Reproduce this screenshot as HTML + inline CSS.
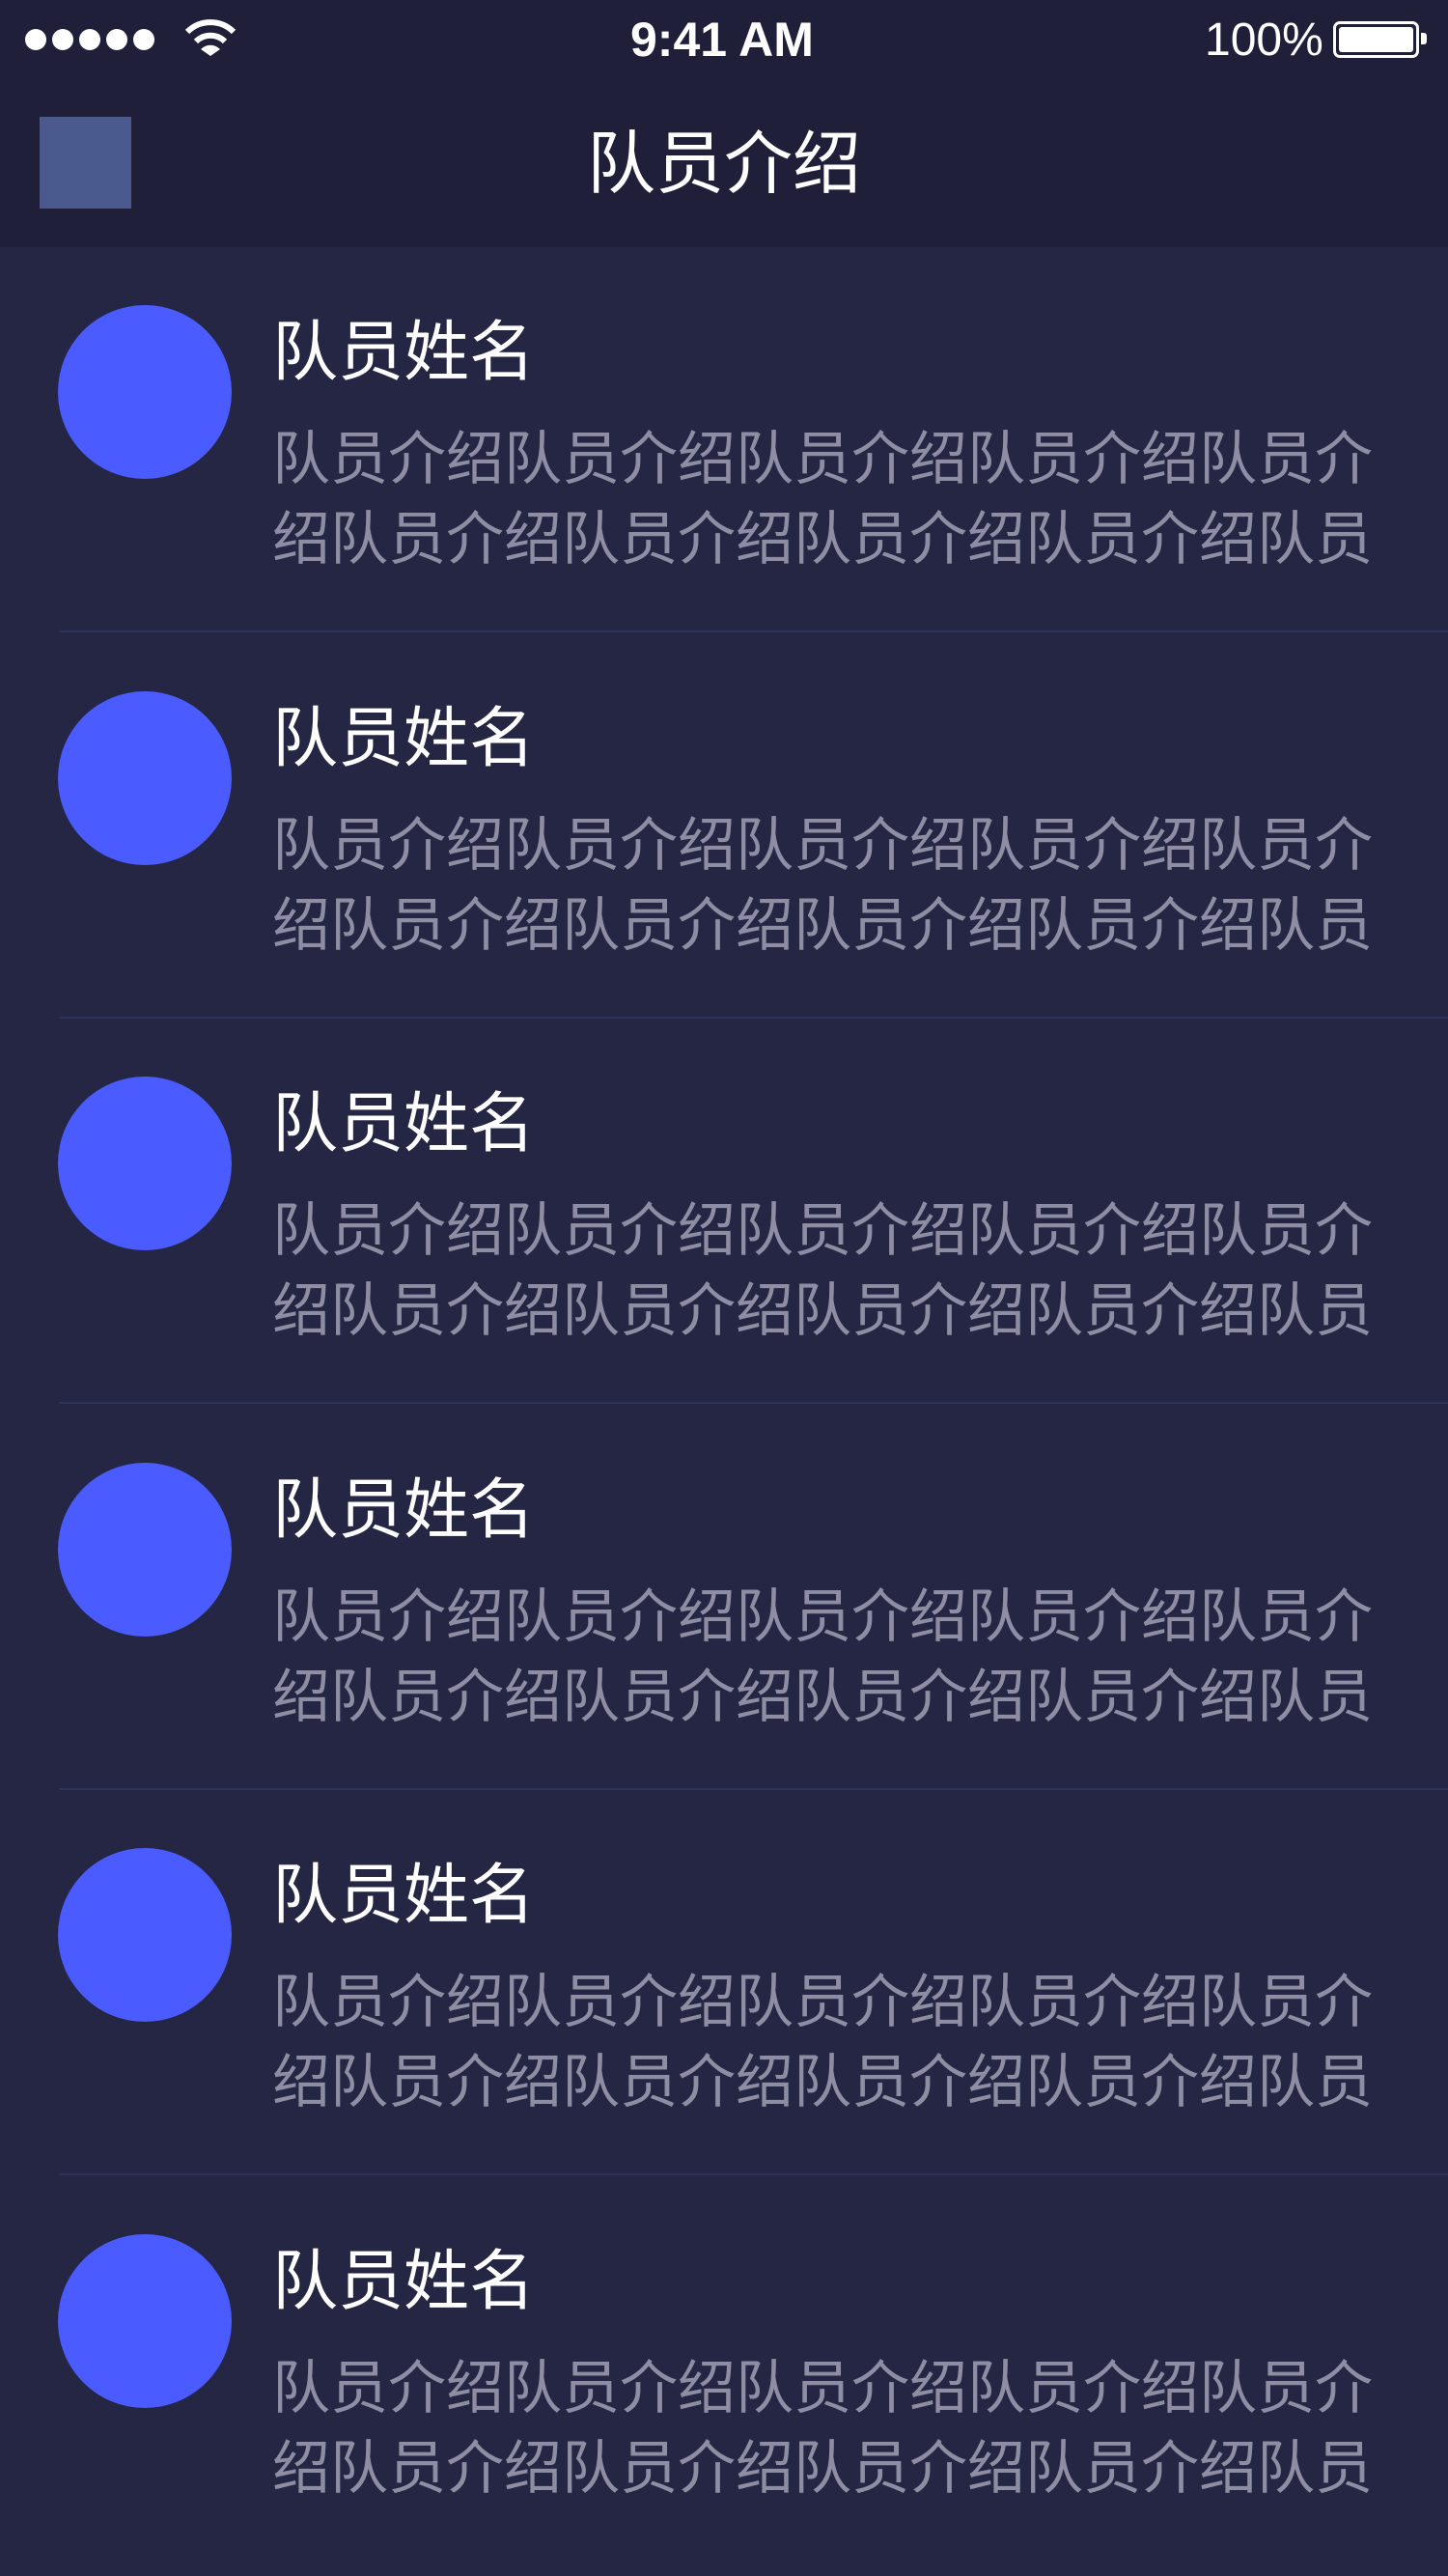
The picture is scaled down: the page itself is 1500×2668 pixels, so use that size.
<!DOCTYPE html>
<html><head><meta charset="utf-8"><style>
*{margin:0;padding:0;box-sizing:border-box}
body{width:1500px;height:2668px;background:#242644;position:relative;overflow:hidden;font-family:"Liberation Sans","Noto Sans CJK SC",sans-serif}
.hdr{position:absolute;left:0;top:0;width:1500px;height:256px;background:#1f1f39}
.dot{position:absolute;top:30px;width:22px;height:22px;border-radius:50%;background:#fff}
.t{position:absolute;color:#fff;white-space:nowrap}
.row{position:absolute;left:0;width:1500px;height:400px}
.av{position:absolute;left:60px;top:60px;width:180px;height:180px;border-radius:50%;background:#4a5cff}
.nm{position:absolute;left:282px;top:64px;font-size:68px;line-height:90px;color:#fff;white-space:nowrap}
.ds{position:absolute;left:282px;top:178px;white-space:nowrap;font-size:60px;line-height:83px;color:#8d8ea3}
.sep{position:absolute;left:61px;right:0;top:397px;height:2px;background:#2f3258}
</style></head><body>
<div class="hdr">
<div class="dot" style="left:26px"></div><div class="dot" style="left:54px"></div><div class="dot" style="left:82px"></div><div class="dot" style="left:110px"></div><div class="dot" style="left:138px"></div>
<svg style="position:absolute;left:190px;top:20px" width="56" height="40" viewBox="0 0 56 40"><path d="M4 13 A34 34 0 0 1 52 13" stroke="#fff" stroke-width="6" fill="none"/><path d="M13 23 A21 21 0 0 1 43 23" stroke="#fff" stroke-width="6" fill="none"/><path d="M18 31 L28 38 L38 31 A14 14 0 0 0 18 31Z" fill="#fff"/></svg>
<div class="t" style="left:653px;top:10px;font-size:50px;font-weight:bold;line-height:62px">9:41 AM</div>
<div class="t" style="left:1248px;top:12px;font-size:48px;line-height:60px">100%</div>
<div style="position:absolute;left:1381px;top:22px;width:89px;height:38px;border:3px solid #fff;border-radius:7px;padding:3px"><div style="width:100%;height:100%;background:#fff;border-radius:3px"></div></div>
<div style="position:absolute;left:1472px;top:34px;width:6px;height:12px;background:#fff;border-radius:0 3px 3px 0"></div>
<div style="position:absolute;left:41px;top:121px;width:95px;height:95px;background:#4a5a8e"></div>
<div class="t" style="left:0;width:1500px;text-align:center;top:126px;font-size:71px;line-height:90px">队员介绍</div>
</div>
<div class="row" style="top:256px"><div class="av"></div><div class="nm">队员姓名</div><div class="ds">队员介绍队员介绍队员介绍队员介绍队员介<br>绍队员介绍队员介绍队员介绍队员介绍队员</div><div class="sep"></div></div>
<div class="row" style="top:656px"><div class="av"></div><div class="nm">队员姓名</div><div class="ds">队员介绍队员介绍队员介绍队员介绍队员介<br>绍队员介绍队员介绍队员介绍队员介绍队员</div><div class="sep"></div></div>
<div class="row" style="top:1055px"><div class="av"></div><div class="nm">队员姓名</div><div class="ds">队员介绍队员介绍队员介绍队员介绍队员介<br>绍队员介绍队员介绍队员介绍队员介绍队员</div><div class="sep"></div></div>
<div class="row" style="top:1455px"><div class="av"></div><div class="nm">队员姓名</div><div class="ds">队员介绍队员介绍队员介绍队员介绍队员介<br>绍队员介绍队员介绍队员介绍队员介绍队员</div><div class="sep"></div></div>
<div class="row" style="top:1854px"><div class="av"></div><div class="nm">队员姓名</div><div class="ds">队员介绍队员介绍队员介绍队员介绍队员介<br>绍队员介绍队员介绍队员介绍队员介绍队员</div><div class="sep"></div></div>
<div class="row" style="top:2254px"><div class="av"></div><div class="nm">队员姓名</div><div class="ds">队员介绍队员介绍队员介绍队员介绍队员介<br>绍队员介绍队员介绍队员介绍队员介绍队员</div></div>
</body></html>
